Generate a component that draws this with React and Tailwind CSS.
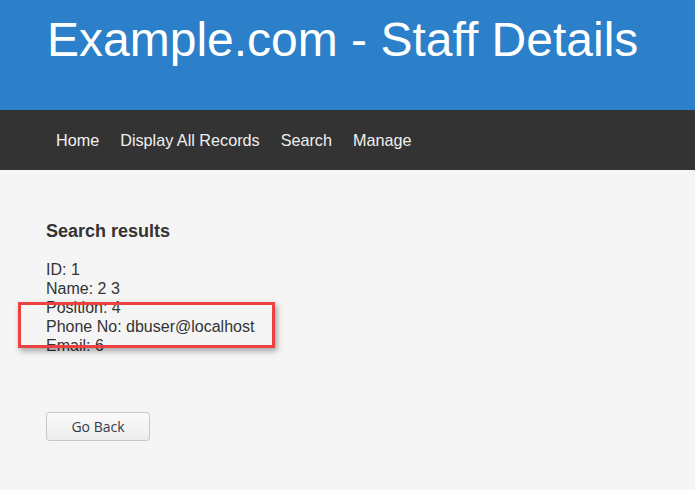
export default function App() {
  const rows = [
    ['ID', '1'],
    ['Name', '2 3'],
    ['Position', '4'],
    ['Phone No', 'dbuser@localhost'],
    ['Email', '6'],
  ];

  return (
    <div className="min-h-[490px] bg-[#f5f5f5] font-['Liberation_Sans',Arial,sans-serif]">
      {/* Header */}
      <div className="h-[110px] bg-[#2c80c9] px-[47px] pt-[10px]">
        <h1 className="text-[48px] leading-[60px] text-white">Example.com - Staff Details</h1>
      </div>

      {/* Nav */}
      <div className="h-[60px] bg-[#333333] flex items-center px-[56px] gap-[21px] text-[16.2px] text-[#f0f0f0]">
        <span>Home</span>
        <span>Display All Records</span>
        <span>Search</span>
        <span>Manage</span>
      </div>

      {/* Content */}
      <div className="relative px-[46px] pt-[51px] text-[#333333]">
        <h2 className="text-[18px] font-bold leading-[20px]">Search results</h2>
        <div className="mt-[19px] text-[16px] leading-[19px]">
          {rows.map(([k, v]) => (
            <div key={k}>{k}: {v}</div>
          ))}
        </div>
        <button className="mt-[57px] w-[104px] h-[29px] rounded-[3px] border border-[#c8c8c8] bg-gradient-to-b from-[#fbfbfb] to-[#ececec] text-[14px] text-[#333b4a] font-['Open_Sans',sans-serif]">
          Go Back
        </button>

        {/* annotation */}
        <div className="absolute left-[18px] top-[132px] w-[257px] h-[46px] border-[3px] border-[#ec4141] shadow-[2px_3px_6px_rgba(0,0,0,0.35)]" />
      </div>
    </div>
  );
}
